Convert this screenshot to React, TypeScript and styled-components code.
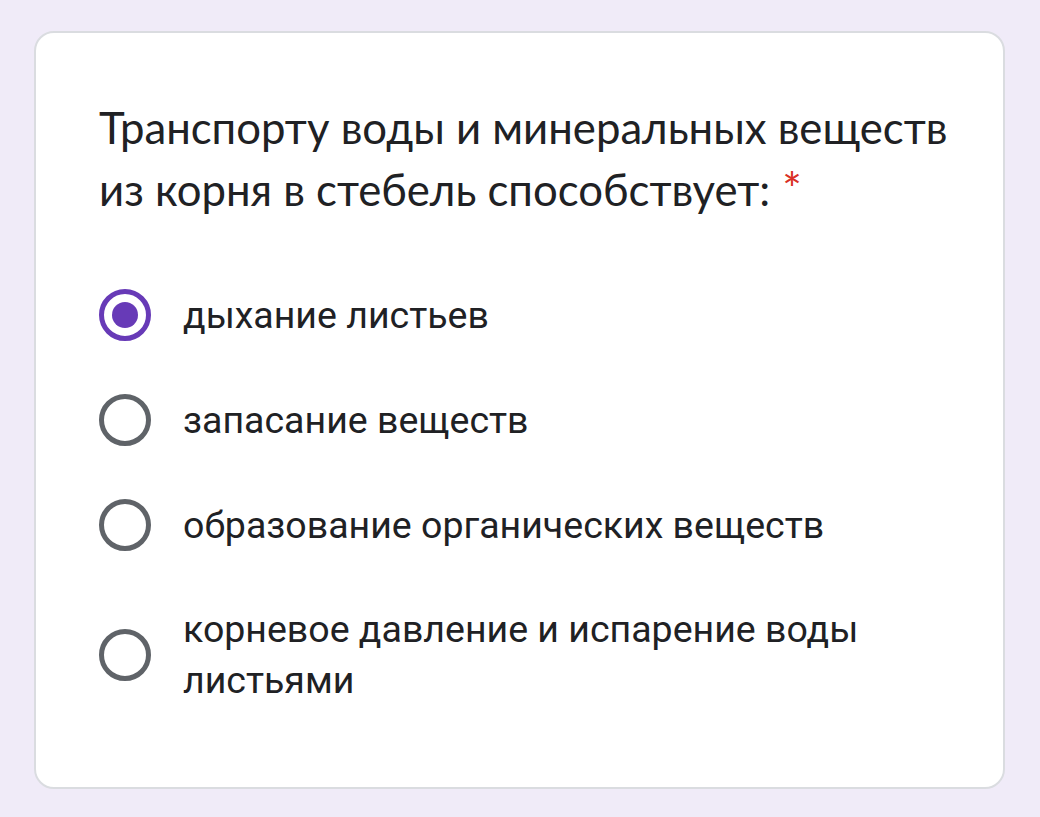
import styled, { createGlobalStyle } from "styled-components"

const GlobalStyle = createGlobalStyle`
  html, body {
    margin: 0;
    padding: 0;
    background: #f0ebf8;
  }
`

const Page = styled.div`
  width: 1040px;
  height: 817px;
  padding: 31px 35px 0 34px;
  box-sizing: border-box;
`

const Card = styled.div`
  background: #ffffff;
  border: 2px solid #dadce0;
  border-radius: 20px;
  height: 758px;
  box-sizing: border-box;
  padding: 63px 40px 0 63px;
`

const Title = styled.div`
  max-width: 860px;
  font-family: Lato, "Open Sans", sans-serif;
  font-size: 43.7px;
  line-height: 62px;
  color: #202124;
`

const Required = styled.span`
  color: #d93025;
  margin-left: 12px;
  font-size: 46px;
`

const Options = styled.div`
  display: flex;
  flex-direction: column;
  gap: 53px;
  margin-top: 69px;
`

const Option = styled.label`
  display: flex;
  align-items: center;
  gap: 32px;
`

const Radio = styled.span<{ $checked?: boolean }>`
  flex-shrink: 0;
  width: 52px;
  height: 52px;
  box-sizing: border-box;
  border-radius: 50%;
  border: 5px solid ${(p) => (p.$checked ? "#673ab7" : "#5f6368")};
  display: flex;
  align-items: center;
  justify-content: center;

  &::after {
    content: "";
    display: ${(p) => (p.$checked ? "block" : "none")};
    width: 26px;
    height: 26px;
    border-radius: 50%;
    background: #673ab7;
  }
`

const OptionText = styled.span`
  font-family: Roboto, "Liberation Sans", sans-serif;
  font-size: 37.5px;
  line-height: 51px;
  color: #202124;
`

const options = [
  { label: "дыхание листьев", checked: true },
  { label: "запасание веществ" },
  { label: "образование органических веществ" },
  { label: "корневое давление и испарение воды листьями" },
]

export default function App() {
  return (
    <>
      <GlobalStyle />
      <Page>
        <Card>
          <Title>
            Транспорту воды и минеральных веществ из корня в стебель способствует:
            <Required>*</Required>
          </Title>
          <Options>
            {options.map((o) => (
              <Option key={o.label}>
                <Radio $checked={o.checked} />
                <OptionText>{o.label}</OptionText>
              </Option>
            ))}
          </Options>
        </Card>
      </Page>
    </>
  )
}
